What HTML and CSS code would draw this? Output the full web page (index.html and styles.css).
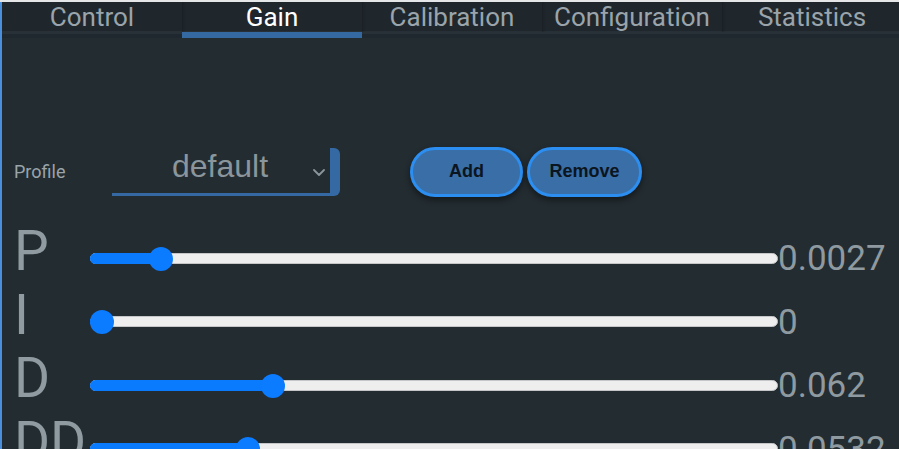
FILE: index.html
```html
<!DOCTYPE html>
<html lang="en">
<head>
<meta charset="utf-8">
<title>Gain</title>
<link rel="stylesheet" href="styles.css">
</head>
<body>
<div class="app">
  <nav class="tabs">
    <div class="tab">Control</div>
    <div class="tab active">Gain</div>
    <div class="tab">Calibration</div>
    <div class="tab">Configuration</div>
    <div class="tab">Statistics</div>
  </nav>
  <main class="gain">
    <div class="profile-row">
      <div class="profile-label">Profile</div>
      <div class="select">
        <span class="select-value">default</span>
        <svg class="chevron" width="12" height="7" viewBox="0 0 12 7"><path d="M1 1l5 5 5-5" fill="none" stroke="#8a969c" stroke-width="1.8" stroke-linecap="round" stroke-linejoin="round"/></svg>
      </div>
      <div class="buttons">
        <button class="btn btn-add">Add</button>
        <button class="btn btn-remove">Remove</button>
      </div>
    </div>
    <div class="gains">
      <div class="gain-row">
        <div class="gain-label">P</div>
        <div class="slider" style="--v:0.089"><div class="track"></div><div class="fill"></div><div class="thumb"></div></div>
        <div class="gain-value">0.0027</div>
      </div>
      <div class="gain-row">
        <div class="gain-label">I</div>
        <div class="slider" style="--v:0"><div class="track"></div><div class="fill"></div><div class="thumb"></div></div>
        <div class="gain-value">0</div>
      </div>
      <div class="gain-row">
        <div class="gain-label">D</div>
        <div class="slider" style="--v:0.257"><div class="track"></div><div class="fill"></div><div class="thumb"></div></div>
        <div class="gain-value">0.062</div>
      </div>
      <div class="gain-row">
        <div class="gain-label">DD</div>
        <div class="slider" style="--v:0.22"><div class="track"></div><div class="fill"></div><div class="thumb"></div></div>
        <div class="gain-value">0.0532</div>
      </div>
    </div>
  </main>
</div>
</body>
</html>
```
FILE: styles.css
```css
html, body {
  margin: 0;
  padding: 0;
  height: 449px;
  overflow: hidden;
  background: #232c31;
}

.app {
  height: 449px;
  border-top: 2px solid #e4e6e7;
  box-sizing: border-box;
  display: flex;
  flex-direction: column;
  font-family: Roboto, "Liberation Sans", sans-serif;
}

.tabs {
  border-left: 2px solid #4a8fdc;
  height: 40px;
  display: grid;
  grid-template-columns: repeat(5, 180px);
  background: linear-gradient(to bottom, #1f272d 0, #1f272d 29px, #283137 29px, #283137 32px, #1f282e 32px, #1f282e 40px);
}

.tab {
  height: 29px;
  padding-top: 1px;
  line-height: 28px;
  font-size: 26px;
  text-align: center;
  color: #9aa4aa;
  border-bottom: 6px solid transparent;
  box-shadow: inset 3px 0 3px -2px rgba(0, 0, 0, 0.25);
}

.tab:first-child {
  box-shadow: none;
}

.tab.active {
  color: #ffffff;
  border-bottom-color: #3569a1;
}

.gain {
  flex: 1;
  border-left: 2px solid #4a8fdc;
  padding: 108px 0 0 12px;
}

.profile-row {
  height: 51px;
  display: flex;
  align-items: center;
}

.profile-label {
  width: 98px;
  font-size: 18px;
  color: #9aa4aa;
}

.select {
  position: relative;
  box-sizing: border-box;
  width: 228px;
  height: 48px;
  border-right: 10px solid #3569a3;
  border-bottom: 3px solid #3569a3;
  border-radius: 0 6px 6px 0;
  display: flex;
  align-items: center;
  justify-content: center;
  padding-bottom: 8px;
  padding-right: 2px;
}

.select-value {
  font-family: "Liberation Sans", Arial, sans-serif;
  font-size: 32px;
  color: #8a969c;
}

.chevron {
  position: absolute;
  right: 5px;
  top: 21px;
}

.buttons {
  margin-left: 70px;
  display: flex;
  gap: 4px;
}

.btn {
  box-sizing: border-box;
  height: 50px;
  border: 3px solid #2c8ef0;
  border-radius: 25px;
  background: #3a6ea6;
  color: #0b1520;
  font-family: "Liberation Sans", Arial, sans-serif;
  font-weight: bold;
  font-size: 18px;
  padding: 0;
  box-shadow: 0 3px 6px rgba(0, 0, 0, 0.45);
}

.btn-add {
  width: 113px;
}

.btn-remove {
  width: 115px;
}

.gains {
  margin-top: 30px;
  display: flex;
  flex-direction: column;
}

.gain-row {
  height: 63.5px;
  display: flex;
  align-items: center;
}

.gain-label {
  width: 76px;
  font-size: 55px;
  line-height: 1;
  color: #8f9ba1;
  margin-bottom: 14px;
}

.slider {
  position: relative;
  width: 688px;
  height: 24px;
}

.track {
  position: absolute;
  left: 0;
  right: 0;
  top: 6px;
  height: 11px;
  box-sizing: border-box;
  border-radius: 6px;
  background: #eeeeee;
  border: 1px solid #c4c6c8;
}

.fill {
  position: absolute;
  left: 0;
  top: 6px;
  height: 11px;
  border-radius: 6px;
  background: #0b7bfd;
  width: calc(var(--v) * (100% - 24px) + 12px);
}

.thumb {
  position: absolute;
  top: 0;
  left: calc(var(--v) * (100% - 24px));
  width: 24px;
  height: 24px;
  border-radius: 50%;
  background: #0b7bff;
}

.gain-value {
  font-size: 35px;
  color: #8f9aa0;
  white-space: nowrap;
}
```
